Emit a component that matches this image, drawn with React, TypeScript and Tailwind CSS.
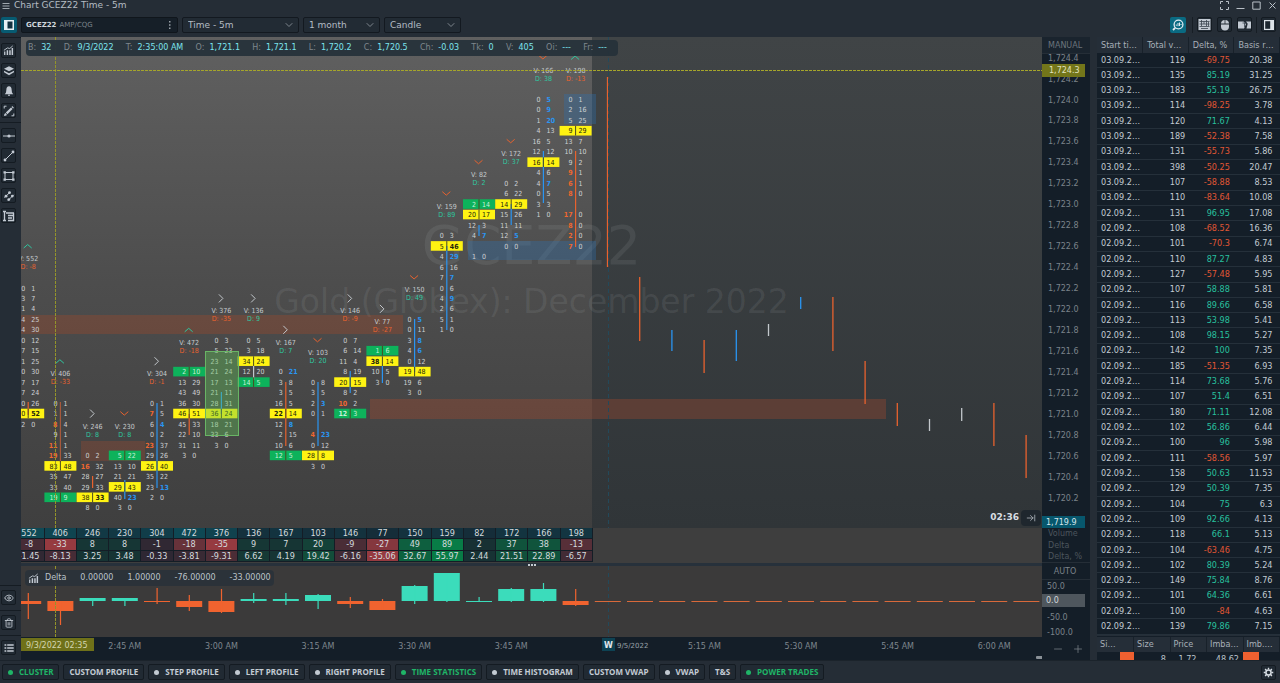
import React from "react";
import { ArrowRightToLine, ChevronDown, Eye, Trash2, Minus, Plus } from "lucide-react";

type Kind = "" | "y" | "g";
interface Row {
  r: number;
  a: string;
  b: string;
  k: Kind;
}
interface Cluster {
  v: number;
  d: number;
  pct: string;
  dir: "up" | "down" | "right";
  dirColor: string;
  start: number;
  rows: string;
  line?: [number, number, string];
}

const ORANGE = "#e8622e";
const BLUE = "#2a95f2";
const TEAL = "#2fc7a0";
const PALE = "#c3c8cc";

const PITCH = 32.2;
const colX = (k: number) => 7.2 + PITCH * k;
const rowY = (r: number) => 62.5 + 10.474 * r;

// Row syntax: "bid ask", leading y/g = filled cells, trailing o = orange, b = blue, * = bold, "-" = empty level
const clusters: Cluster[] = [
  { v: 552, d: -8, pct: "-1.45", dir: "up", dirColor: TEAL, start: 18, rows: "0 1|3 7|11 4|24 25|34 30|10 12|7 15|21 25|20 30|7 17|17 24|20 26|y70 52*|2 0", line: [365, 378, ORANGE] },
  { v: 406, d: -33, pct: "-8.13", dir: "up", dirColor: TEAL, start: 29, rows: "0 1|1 1|8o 4|9 1|11o 1|19o 33|y83 48|35 47|33 40|g19 9", line: [365, 425, "#a8593c"] },
  { v: 246, d: 8, pct: "3.25", dir: "right", dirColor: PALE, start: 34, rows: "0 2|16o 32|28 27|29 33|y38 33*|8 0", line: [439, 451, ORANGE] },
  { v: 230, d: 8, pct: "3.48", dir: "down", dirColor: ORANGE, start: 34, rows: "g5 22|13 10|21 21|y29 43|40 23b|3 0", line: [443, 462, BLUE] },
  { v: 304, d: -1, pct: "-0.33", dir: "right", dirColor: PALE, start: 29, rows: "0 1|7o 5|6 4b|0 2|23o 37|29 26|y26 40|35 22|23 13b|2 0", line: [366, 451, BLUE] },
  { v: 472, d: -18, pct: "-3.81", dir: "up", dirColor: TEAL, start: 26, rows: "g2 10|13 29|43 49|36 30|y46 51|45 33|22 10|31 11|3 0", line: [377, 398, ORANGE] },
  { v: 376, d: -35, pct: "-9.31", dir: "right", dirColor: PALE, start: 23, rows: "0 3|5 23|23 14|21 24|17 13|21 11|28 31|y36 24|18 21|33 6|3 0", line: [355, 377, BLUE] },
  { v: 136, d: 9, pct: "6.62", dir: "right", dirColor: PALE, start: 23, rows: "0 5|3 18|y34 24|12 20|g14 5", line: [329, 343, PALE] },
  { v: 167, d: 7, pct: "4.19", dir: "right", dirColor: PALE, start: 26, rows: "0 21b|3 8|3 5|16 5|y22* 14|12 8b|2 15|10 6|g12 5", line: [345, 409, ORANGE] },
  { v: 103, d: 20, pct: "19.42", dir: "down", dirColor: ORANGE, start: 27, rows: "0 8|3 5|2 3b|0 1|-|4o 23b|0 12|y28 8|3 0", line: [345, 409, BLUE] },
  { v: 146, d: -9, pct: "-6.16", dir: "right", dirColor: PALE, start: 23, rows: "0 7|6 14|11 4|8 19|y20 15|8 2|10o 2|g12* 3", line: [334, 356, BLUE] },
  { v: 77, d: -27, pct: "-35.06", dir: "right", dirColor: PALE, start: 24, rows: "g1 6|y38* 14|10 5|3 0", line: [329, 346, BLUE] },
  { v: 150, d: 49, pct: "32.67", dir: "down", dirColor: ORANGE, start: 21, rows: "0 5b|0 11|3 8b|4 6b|0 12|y19 48|19 6|3 0", line: [282, 335, BLUE] },
  { v: 159, d: 89, pct: "55.97", dir: "down", dirColor: ORANGE, start: 13, rows: "0 3|y5 46*|4 29b|6 16|7 7b|0 6|4 9b|2 6|5 1|1 0", line: [209, 293, BLUE] },
  { v: 82, d: 2, pct: "2.44", dir: "down", dirColor: ORANGE, start: 10, rows: "g2 14|y20 17|12 3|4 7b|-|1 0", line: [188, 199, BLUE] },
  { v: 172, d: 37, pct: "21.51", dir: "down", dirColor: ORANGE, start: 8, rows: "0 2|6 22|y14 29|15 26|11 11|12 5b|0 0", line: [167, 188, BLUE] },
  { v: 166, d: 38, pct: "22.89", dir: "down", dirColor: ORANGE, start: 0, rows: "0 5b|0 9b|1 20b|4 13|16 5|12 12|y16 14|4 6|4 7b|0 5|3 3|1 0", line: [114, 166, BLUE] },
  { v: 198, d: -13, pct: "-6.57", dir: "up", dirColor: TEAL, start: 0, rows: "0 1|2 16|5 25|y9 29|13 7|10 10|9 2|9o 1|6o 1|8o 0|-|17o 0|8o 0|2o 0|7o 0", line: [114, 210, ORANGE] },
];

const parseRows = (c: Cluster): Row[] =>
  c.rows.split("|").flatMap((s, i) => {
    if (s === "-") return [];
    const k: Kind = s[0] === "y" ? "y" : s[0] === "g" ? "g" : "";
    const [a, b] = (k ? s.slice(1) : s).split(" ");
    return [{ r: c.start + i, a, b, k }];
  });

const cellFill = (t: string, k: Kind) => {
  if (k === "y") return "#22240a";
  if (k === "g") return "#c8f0d8";
  if (t.endsWith("o")) return "#f0672f";
  if (t.endsWith("b")) return BLUE;
  return "#cfd2d4";
};
const isBold = (t: string) => /[ob*]$/.test(t);

const candles: [number, number, number, string][] = [
  [18, 40, 230, ORANGE],
  [19, 240, 304, ORANGE],
  [20, 293, 314, BLUE],
  [21, 303, 336, ORANGE],
  [22, 293, 324, BLUE],
  [23, 287, 299, PALE],
  [24, 260, 272, BLUE],
  [25, 260, 314, ORANGE],
  [26, 324, 367, ORANGE],
  [27, 366, 389, ORANGE],
  [28, 382, 394, PALE],
  [29, 371, 384, PALE],
  [30, 366, 409, ORANGE],
  [31, 398, 441, ORANGE],
];

// body top, body bottom, wick top, wick bottom
const deltaBars: [number, number, number, number, 0 | 1][] = [
  [35, 38, 27, 53, 0],
  [35, 45, 35, 59, 0],
  [32, 35, 32, 40, 1],
  [32, 35, 32, 40, 1],
  [35, 36, 22, 38, 0],
  [35, 41, 29, 45, 0],
  [35, 46, 23, 47, 0],
  [33, 35, 27, 37, 1],
  [33, 35, 27, 39, 1],
  [29, 35, 28, 43, 1],
  [35, 38, 31, 42, 0],
  [35, 44, 33, 44, 0],
  [20, 35, 19, 38, 1],
  [7, 35, 7, 36, 1],
  [35, 36, 31, 35, 1],
  [23, 35, 22, 36, 1],
  [23, 35, 17, 36, 1],
  [35, 39, 23, 40, 0],
];

const trades = `119 -69.75 20.38|135 85.19 31.25|183 55.19 26.75|114 -98.25 3.78|120 71.67 4.13|189 -52.38 7.58|131 -55.73 5.86|398 -50.25 20.47|107 -58.88 8.53|110 -83.64 10.08|131 96.95 17.08|108 -68.52 16.36|101 -70.3 6.74|110 87.27 4.83|127 -57.48 5.95|107 58.88 5.81|116 89.66 6.58|113 53.98 5.41|108 98.15 5.27|142 100 7.35|185 -51.35 6.93|114 73.68 5.76|107 51.4 6.51|180 71.11 12.08|102 56.86 6.44|100 96 5.98|111 -58.56 5.97|158 50.63 11.53|129 50.39 7.35|104 75 6.3|109 92.66 4.13|118 66.1 5.13|104 -63.46 4.75|102 80.39 5.24|149 75.84 8.76|101 64.36 6.61|100 -84 4.63|139 79.86 7.15`
  .split("|")
  .map((s) => s.split(" "));

const NARROW = "font-['DejaVu_Sans_Condensed','Noto_Sans',sans-serif]";

function Chevron({ x, y, dir, color }: { x: number; y: number; dir: string; color: string }) {
  const d =
    dir === "up"
      ? `M${x - 4} ${y + 2}L${x} ${y - 1.5}L${x + 4} ${y + 2}`
      : dir === "down"
        ? `M${x - 4} ${y - 2}L${x} ${y + 1.5}L${x + 4} ${y - 2}`
        : `M${x - 2} ${y - 4}L${x + 2} ${y}L${x - 2} ${y + 4}`;
  return <path d={d} fill="none" stroke={color} strokeWidth="1" />;
}

function ClusterColumn({ c, k }: { c: Cluster; k: number }) {
  const x = colX(k);
  const top = rowY(c.start);
  const rows = parseRows(c);
  return (
    <g>
      <Chevron x={x - 0.5} y={top - 42} dir={c.dir} color={c.dirColor} />
      <text x={x} y={top - 27} textAnchor="middle" fill="#c5cacd">{`V: ${c.v}`}</text>
      <text x={x} y={top - 19} textAnchor="middle" fill={c.d < 0 ? ORANGE : TEAL}>{`D: ${c.d}`}</text>
      {rows.map((row) =>
        row.k ? (
          <rect key={row.r} x={x - 16} y={rowY(row.r) - 5} width="32" height="9.6" fill={row.k === "y" ? "#fff312" : "#0db25b"} />
        ) : null,
      )}
      {c.line && <path d={`M${x} ${c.line[0]}V${c.line[1]}`} stroke={c.line[2]} strokeWidth="1.2" />}
      {rows.map((row) => {
        const y = rowY(row.r) + 2.5;
        return (
          <g key={row.r}>
            {row.k && <path d={`M${x} ${y - 7.5}v9.6`} stroke="#4a4a22" />}
            <text x={x - 3} y={y} textAnchor="end" fill={cellFill(row.a, row.k)} fontWeight={isBold(row.a) ? 700 : 400}>
              {row.a.replace(/[ob*]$/, "")}
            </text>
            <text x={x + 3} y={y} fill={cellFill(row.b, row.k)} fontWeight={isBold(row.b) ? 700 : 400}>
              {row.b.replace(/[ob*]$/, "")}
            </text>
          </g>
        );
      })}
    </g>
  );
}

function MainPlot() {
  return (
    <svg className={`block h-full w-full text-[7px] ${NARROW}`} role="img" aria-label="Cluster chart">
      <defs>
        <linearGradient id="bg" x1="0" y1="0" x2="0" y2="1">
          <stop offset="0" stopColor="#606060" />
          <stop offset="0.5" stopColor="#4d4d4d" />
          <stop offset="1" stopColor="#3f3f3f" />
        </linearGradient>
        <linearGradient id="night" x1="0" y1="0" x2="0" y2="1">
          <stop offset="0" stopColor="#404446" />
          <stop offset="1" stopColor="#303538" />
        </linearGradient>
      </defs>
      <rect width="571" height="100%" fill="url(#bg)" />
      <rect x="571" width="100%" height="100%" fill="url(#night)" />
      <g fill="#c8ccd0" fillOpacity="0.1" textAnchor="middle" fontFamily="'DejaVu Sans',sans-serif">
        <text x="50%" y="227" fontSize="54">GCEZ22</text>
        <text x="50%" y="276" fontSize="33">Gold (Globex): December 2022</text>
      </g>
      <rect x="0" y="278" width="382" height="19" fill="#c04a1e" fillOpacity="0.26" />
      <rect x="349" y="362" width="516" height="20" fill="#b04a2a" fillOpacity="0.32" />
      <rect x="60" y="404" width="64" height="20" fill="#b04a2a" fillOpacity="0.28" />
      <rect x="543" y="57" width="32" height="30" fill="#2d6fae" fillOpacity="0.35" />
      <rect x="447" y="204" width="128" height="19" fill="#2d6fae" fillOpacity="0.35" />
      {clusters.map((c, k) => (
        <ClusterColumn key={k} c={c} k={k} />
      ))}
      {candles.map(([k, a, b, color]) => (
        <path key={k} d={`M${colX(k) - 0.3} ${a}V${b}`} stroke={color} strokeWidth="1.3" />
      ))}
      <rect x="184.5" y="314.5" width="33" height="84" fill="#62c45a" fillOpacity="0.38" stroke="#69b565" />
      <path d="M587.5 0V2000" stroke="#23495a" strokeDasharray="4 3" />
      <path d="M34.5 0V2000" stroke="#94942a" strokeDasharray="3 1" />
      <path d="M0 33.5H4000" stroke="#a5a52b" strokeDasharray="3 1" />
    </svg>
  );
}

function Readout() {
  const items: [string, string][] = [
    ["B", "32"], ["D", "9/3/2022"], ["T", "2:35:00 AM"], ["O", "1,721.1"], ["H", "1,721.1"], ["L", "1,720.2"],
    ["C", "1,720.5"], ["Ch", "-0.03"], ["Tk", "0"], ["V", "405"], ["Oi", "---"], ["Fr", "---"],
  ];
  return (
    <dl className="absolute top-[3px] left-[5px] flex h-4 w-[592px] items-center justify-between rounded-sm bg-[#26313a]/95 pr-[11px] pl-0.5 text-[8px]">
      {items.map(([k, v]) => (
        <div key={k} className="flex gap-[5px] whitespace-nowrap">
          <dt className="text-[#7f878d]">{k}:</dt>
          <dd className="text-[#7ce4ee]">{v}</dd>
        </div>
      ))}
    </dl>
  );
}

const mix = (from: number[], to: number[], t: number) =>
  `rgb(${from.map((f, i) => Math.round(f + (to[i] - f) * Math.min(1, t))).join(",")})`;
const BASE = [26, 36, 48];
const signed = (v: number, max: number) => (v < 0 ? mix(BASE, [150, 58, 64], 0.15 - v / 38) : mix(BASE, [8, 124, 70], 0.12 + v / max));

function StatsTable() {
  const rows: { name: string; get: (c: Cluster) => string; color: (c: Cluster) => string }[] = [
    { name: "Volume", get: (c) => `${c.v}`, color: (c) => mix([23, 36, 48], [14, 74, 86], 0.1 + c.v / 552) },
    { name: "Delta", get: (c) => `${c.d}`, color: (c) => signed(c.d, 89) },
    { name: "Delta, %", get: (c) => c.pct, color: (c) => signed(parseFloat(c.pct), 56) },
  ];
  return (
    <div className="h-[35px] shrink-0 overflow-hidden bg-[#3e3e3e]">
      <table className={`h-[34px] w-[572px] table-fixed border-collapse text-[9px] leading-[10px] text-[#d4dade] ${NARROW}`}>
        <colgroup>
          <col className="w-[23px]" />
          {clusters.slice(1).map((_, i) => (
            <col key={i} />
          ))}
        </colgroup>
        <tbody>
          {rows.map((row) => (
            <tr key={row.name}>
              {clusters.map((c, i) => (
                <td key={i} className="overflow-hidden border-r border-b border-[#141d26] p-0 text-center" style={{ background: row.color(c) }}>
                  {i === 0 ? <span className="-ml-2 block w-8">{row.get(c)}</span> : row.get(c)}
                </td>
              ))}
            </tr>
          ))}
        </tbody>
      </table>
    </div>
  );
}

function BarsIcon() {
  return (
    <svg viewBox="0 0 12 12" className="size-[11px] shrink-0" fill="#c3cad3">
      <path d="M1.2 7.2h1.4V11H1.2zM4 5.6h1.6V11H4zM6.8 5.6h1.6V11H6.800zM9.400 3.200H11V11H9.400z" />
      <path d="M1 5.800L4.800 3.200 7.400 3.800 10.600 1" fill="none" stroke="#c3cad3" strokeWidth="1" />
    </svg>
  );
}

function DeltaPane() {
  return (
    <div className="relative h-[71px] shrink-0 bg-[#3b3a3a]">
      <svg className="block h-full w-full" role="img" aria-label="Delta histogram">
        <path d="M587.5 0V80" stroke="#23495a" strokeDasharray="4 3" />
        {deltaBars.map(([t, b, wt, wb, up], k) => (
          <g key={k} fill={up ? "#3bdcbb" : "#f0632f"}>
            <rect x={colX(k) - 13} y={t} width="26" height={b - t} />
            <rect x={colX(k) - 0.5} y={wt} width="1.2" height={wb - wt} />
          </g>
        ))}
        {Array.from({ length: 50 }, (_, i) => (
          <rect key={i} x={colX(i + 18) - 13} y="35" width="26" height="1" fill="#d9693a" />
        ))}
        <path d="M34.5 0V71" stroke="#94942a" strokeDasharray="3 1" />
      </svg>
      <div className="absolute top-1 left-1 flex h-4 items-center gap-[14px] rounded-sm bg-[#2a323a]/90 px-[3px] text-[8px] whitespace-nowrap text-[#bcc3c9]">
        <span className="-mr-2"><BarsIcon /></span>
        <span>Delta</span>
        <span>0.00000</span>
        <span>1.00000</span>
        <span>-76.00000</span>
        <span>-33.00000</span>
      </div>
    </div>
  );
}

function TimeAxis() {
  const labels: [number, string][] = [
    [3, "2:45 AM"], [6, "3:00 AM"], [9, "3:15 AM"], [12, "3:30 AM"], [15, "3:45 AM"], [21, "5:15 AM"], [24, "5:30 AM"], [27, "5:45 AM"], [30, "6:00 AM"],
  ];
  return (
    <div className="h-[23px] shrink-0 bg-[#141e28]">
      <svg className="block h-full w-full text-[8px]" fill="#7f878e">
        {labels.map(([k, t]) => (
          <text key={k} x={colX(k)} y="12" textAnchor="middle">{t}</text>
        ))}
        <rect y="1" width="73" height="13" fill="#6f7119" />
        <text x="5" y="11" fill="#d3d5b0">9/3/2022 02:35</text>
        <rect x="581" y="1" width="13" height="13" fill="#0d4253" />
        <text x="587.5" y="11" textAnchor="middle" fontWeight="700" fill="#e2e8ec">W</text>
        <text x="596" y="11" className="text-[7px]" fill="#9aa2a8">9/5/2022</text>
        <rect x="1015" y="19" width="7" height="3" rx="1" fill="#8a9197" />
      </svg>
    </div>
  );
}

function PriceAxis() {
  const ticks = Array.from({ length: 22 }, (_, i) => 1724.4 - i * 0.2).filter((p) => p > 1720.1);
  return (
    <div className="flex w-12 shrink-0 flex-col bg-[#141e28]">
      <svg className="block min-h-0 w-full flex-1 text-[8px]" fill="#7b838a" role="img" aria-label="Price scale">
        {ticks.map((p) => (
          <text key={p} x="6" y={rowY((1724 - p) * 10) + 3}>{`1,${(p - 1000).toFixed(1)}`}</text>
        ))}
        <rect width="48" height="16" fill="#1a242e" />
        <text x="6" y="11" fill="#6c757d">MANUAL</text>
        <rect y="16" width="48" height="1" fill="#252e37" />
        <rect y="27" width="43" height="13" fill="#73761a" />
        <text x="7" y="36" fill="#e0e2c0">1,724.3</text>
        <rect y="479" width="43" height="13" fill="#07576d" />
        <text x="4" y="488" fill="#d6e6ec">1,719.9</text>
      </svg>
      <div className="flex h-[35px] shrink-0 flex-col justify-between border-b border-[#252e37] pl-[6px] text-[8px] leading-[11px] text-[#4c555d]">
        <span>Volume</span>
        <span>Delta</span>
        <span>Delta, %</span>
      </div>
      <svg className="block h-[74px] w-full shrink-0 text-[8px]" fill="#7b838a" role="img" aria-label="Delta scale">
        <rect y="16" width="48" height="1" fill="#252e37" />
        <text x="23" y="11" textAnchor="middle">AUTO</text>
        <text x="5" y="26">50.0</text>
        <rect y="31" width="43" height="13" fill="#4e565d" />
        <text x="4" y="40" fill="#d2d7db">0.0</text>
        <text x="5" y="57">-50.0</text>
        <text x="5" y="72">-100.0</text>
      </svg>
      <div className="flex h-[23px] shrink-0 items-center gap-2 pl-2.5 text-[#7b838a]">
        <button type="button" aria-label="Zoom out"><Minus className="size-3" strokeWidth={1.5} /></button>
        <button type="button" aria-label="Zoom in"><Plus className="size-3" strokeWidth={1.5} /></button>
      </div>
    </div>
  );
}

const TOOL = "flex h-[15px] w-[15px] shrink-0 items-center justify-center rounded-[2px] border border-[#141b22] bg-[#212a33] text-[#c3cad3]";

function Ico({ children }: { children: React.ReactNode }) {
  return (
    <svg viewBox="0 0 12 12" className="size-3 shrink-0" fill="none" stroke="#c3cad3" strokeWidth="1">
      {children}
    </svg>
  );
}

function LeftToolbar() {
  const top: [string, React.ReactNode][] = [
    ["Indicators", <BarsIcon />],
    ["Layers", <Ico><path d="M6 1.300l5 2.500L6 6.300 1 3.800z" fill="#c3cad3" stroke="none" /><path d="M1 5.800l5 2.500 5-2.500v1.400L6 10.200 1 7.200z" fill="#c3cad3" stroke="none" /></Ico>],
    ["Alerts", <Ico><path d="M6 1.200c1.800 0 2.600 1.500 2.600 3.200L9 7.500l1.200 1.700H1.800L3 7.500l.4-3.100C3.400 2.700 4.200 1.200 6 1.200zM5 9.800h2v1H5z" fill="#c3cad3" stroke="none" /></Ico>],
    ["Drawings", <Ico><path d="M3.600 8.400l5.200-5.200" strokeWidth="2.200" /><path d="M9.300 2.700l.8-.8" strokeWidth="2.200" /><path d="M1.200 3.500V1.200h2.300M10.800 8.500v2.300H8.500" /><path d="M1.500 10.500l.7-2 1.300 1.300z" fill="#c3cad3" /></Ico>],
  ];
  const mid: [string, React.ReactNode][] = [
    ["Horizontal line", <Ico><path d="M0 6h12" /><circle cx="6" cy="6" r="1.600" fill="#c3cad3" stroke="none" /></Ico>],
    ["Trend line", <Ico><path d="M2 10l8-8" /><circle cx="2" cy="10" r="1.400" fill="#c3cad3" stroke="none" /><circle cx="10" cy="2" r="1.400" fill="#c3cad3" stroke="none" /></Ico>],
    ["Rectangle", <Ico><path d="M2 2.500h8v7H2z" /><path d="M.5 1.200h2.400v2.400H.5zM9.100 1.200h2.400v2.400H9.100zM.5 8.400h2.400v2.400H.5zM9.100 8.400h2.400v2.400H9.100z" fill="#c3cad3" stroke="none" /></Ico>],
    ["Channel", <Ico><path d="M1.500 7.700L7.200 2M5 10.500l5.700-5.700" /><circle cx="3" cy="6.200" r="1.400" fill="#c3cad3" stroke="none" /><circle cx="6.500" cy="2.700" r="1.400" fill="#c3cad3" stroke="none" /><circle cx="5.800" cy="9.600" r="1.400" fill="#c3cad3" stroke="none" /><circle cx="9.300" cy="6.100" r="1.400" fill="#c3cad3" stroke="none" /></Ico>],
    ["Range profile", <Ico><path d="M1.500 1v10M0 1.500h3M0 10.500h3M3 3h8M5 5.500h6M5 8h4M5 10.500h6M10.500 3v8" strokeWidth="1.300" /></Ico>],
  ];
  const bottom: [string, React.ReactNode][] = [
    ["Show objects", <Eye className="size-2.5" strokeWidth={2} />],
    ["Delete objects", <Trash2 className="size-2.5" strokeWidth={2} />],
    ["Object list", <Ico><path d="M1.500 3h1.800M4.200 3h6.500M1.500 6h1.800M4.200 6h6.500M1.500 9h1.800M4.200 9h6.500" strokeWidth="1.700" /></Ico>],
  ];
  return (
    <nav aria-label="Drawing tools" className="flex w-[21px] shrink-0 flex-col border-t border-[#151c23] bg-[#252d36]">
      <div className="flex flex-col gap-[5px] border-b border-[#151c23] pt-[5px] pb-1 pl-[1px]">
        {top.map(([n, i]) => <button key={n} type="button" aria-label={n} className={TOOL}>{i}</button>)}
      </div>
      <div className="flex flex-1 flex-col gap-[5px] pt-[5px] pl-[1px]">
        {mid.map(([n, i]) => <button key={n} type="button" aria-label={n} className={TOOL}>{i}</button>)}
      </div>
      {bottom.map(([n, i]) => (
        <div key={n} className="border-t border-[#151c23] pt-1 pb-[5px] pl-[1px]">
          <button type="button" aria-label={n} className={TOOL}>{i}</button>
        </div>
      ))}
    </nav>
  );
}

function Picker({ label, value, width }: { label: string; value: string; width: string }) {
  return (
    <label className={`relative flex h-4 items-center ${width}`}>
      <span className="sr-only">{label}</span>
      <select className="h-4 w-full appearance-none rounded-[2px] border border-[#131920] bg-[#222b34] pl-[5px] text-[9px] leading-[14px] text-[#b4bcc4]">
        <option>{value}</option>
      </select>
      <ChevronDown className="pointer-events-none absolute top-0.5 right-1 size-3 text-[#7d858d]" strokeWidth={2} />
    </label>
  );
}

function TopBar() {
  return (
    <header className="shrink-0">
      <div className="flex h-3 items-center pr-[3px] pl-[2px]">
        <svg viewBox="0 0 8 8" className="mr-1 size-2 shrink-0" stroke="#a0a8af"><path d="M.5 1.500h7M.5 4h7M.5 6.500h7" /></svg>
        <h1 className="-mt-0.5 text-[9px] leading-3 text-[#b4bcc3]">Chart GCEZ22 Time - 5m</h1>
        <div className="-mt-0.5 ml-auto flex items-center gap-[7px] text-[#b9c0c7]">
          <button type="button" aria-label="Full screen"><svg viewBox="0 0 9 9" className="size-[9px]" fill="none" stroke="currentColor"><path d="M.5 3V.5H3M6 .5h2.500V3M8.500 6v2.500H6M3 8.500H.5V6" /></svg></button>
          <button type="button" aria-label="Minimize"><svg viewBox="0 0 9 9" className="size-[9px]" fill="none" stroke="currentColor"><path d="M.5 7.500h8" /></svg></button>
          <button type="button" aria-label="Maximize"><svg viewBox="0 0 9 9" className="size-[9px]" fill="none" stroke="currentColor"><path d="M.8 1h7.400v7.200H.8z" /></svg></button>
          <button type="button" aria-label="Close"><svg viewBox="0 0 9 9" className="size-[9px]" fill="none" stroke="currentColor"><path d="M1.500 1.500l6 6M7.500 1.500l-6 6" /></svg></button>
        </div>
      </div>
      <div className="flex h-[25px] items-center pr-1 pl-[1px]">
        <button type="button" aria-label="Toggle left panel" className="flex size-4 shrink-0 items-center justify-center rounded-[2px] bg-[#075b72]">
          <svg viewBox="0 0 10 10" className="size-2.5"><rect width="10" height="10" fill="#e6f0f4" /><rect x="3.500" y="1.500" width="5" height="7" fill="#143240" /></svg>
        </button>
        <div className="ml-1 flex h-4 w-[157px] shrink-0 items-center rounded-[2px] border border-[#10161c] bg-[#161f28] pr-[6px] pl-[4px] leading-[14px]">
          <span className="text-[7px] font-bold text-[#d0d6db]">GCEZ22</span>
          <span className="ml-[3px] text-[7px] text-[#7b838a]">AMP/CQG</span>
          <button type="button" aria-label="Symbol menu" className="ml-auto">
            <svg viewBox="0 0 2 10" className="h-2.5 w-0.5" fill="#9aa2a9"><path d="M0 1h1.500v1.500H0zM0 4.300h1.500v1.500H0zM0 7.600h1.500v1.500H0z" /></svg>
          </button>
        </div>
        <div className="ml-1 flex gap-1">
          <Picker label="Time frame" value="Time - 5m" width="w-[117px]" />
          <Picker label="Period" value="1 month" width="w-[77px]" />
          <Picker label="Chart type" value="Candle" width="w-[77px]" />
        </div>
        <div className="ml-auto flex items-center gap-1">
          <button type="button" aria-label="Search by symbol" className="mr-0.5 flex size-4 items-center justify-center rounded-[2px] bg-[#0a6a82]">
            <svg viewBox="0 0 12 12" className="size-3" fill="none" stroke="#dfeaf0"><circle cx="6.500" cy="5.500" r="4.400" strokeWidth="1.300" /><path d="M3.200 8.800L1 11" strokeWidth="1.800" /><path d="M4.300 6.800V5.500M6 7.200V4M7.500 7V3.500M9 6V5" strokeWidth="1" /></svg>
          </button>
          <span className="h-4 w-px bg-[#171e25]" />
          <div className="flex gap-[5px]">
            <button type="button" aria-label="Keyboard" className={TOOL}>
              <svg viewBox="0 0 13 13" className="size-[13px] shrink-0"><rect x=".5" y="1" width="12" height="11" fill="#c3cad3" /><path d="M1.500 3.500h10M1.500 6h10M1.500 8.500h10M3.500 2v6M6 3.500v2.500M8.500 2v6M10.500 4v4M3 10.500h7" stroke="#39434e" strokeWidth=".8" fill="none" /></svg>
            </button>
            <button type="button" aria-label="Mouse" className={TOOL}>
              <svg viewBox="0 0 12 12" className="size-3 shrink-0" fill="#c3cad3"><path d="M2 4.500C2 2.500 3.500 1 5.600 1v3.500zM6.400 1C8.500 1 10 2.500 10 4.500H6.400zM2 5.400h8v2.300C10 10 8.500 11.500 6 11.500S2 10 2 7.700z" /></svg>
            </button>
            <button type="button" aria-label="Quick trading" className={TOOL}>
              <svg viewBox="0 0 13 12" className="h-3 w-[13px] shrink-0" fill="#c3cad3"><path d="M0 2.500h5.500L8 5 6 9.500H0zM8 2.500h5v7H8.500l1.200-4.700z" /><path d="M4.500 4h4M6.500 4v4" stroke="#39434e" strokeWidth=".8" /></svg>
            </button>
          </div>
          <span className="h-4 w-px bg-[#171e25]" />
          <button type="button" aria-label="Toggle right panel" className={TOOL}>
            <svg viewBox="0 0 10 10" className="size-2.5"><rect width="10" height="10" fill="#dde3e8" /><rect x="1.200" y="1.200" width="5" height="7.600" fill="#1d2730" /></svg>
          </button>
        </div>
      </div>
    </header>
  );
}

function SidePanel() {
  const head = "truncate border-r border-[#18212a] bg-[#252e38] px-[4px] text-left font-normal text-[#a8b0b8]";
  return (
    <aside className={`flex w-[183px] shrink-0 flex-col overflow-hidden bg-[#141e28] text-[9px] leading-[11px] ${NARROW}`}>
      <div className="min-h-0 flex-1 overflow-hidden">
        <table className="h-full w-full table-fixed border-collapse">
          <thead>
            <tr className="h-4">
              {["Start ti…", "Total v…", "Delta, %", "Basis r…"].map((h) => <th key={h} className={head}>{h}</th>)}
            </tr>
          </thead>
          <tbody>
            {trades.map(([vol, delta, basis], i) => (
              <tr key={i} className="border-b border-[#25303a] text-right text-[#c3cbd2]">
                <td className="px-[4px] text-left">{i < 10 ? "03.09.2…" : "02.09.2…"}</td>
                <td className="pr-[3px]">{vol}</td>
                <td className={delta.startsWith("-") ? "pr-1 text-[#e05634]" : "pr-1 text-[#28c09f]"}>{delta}</td>
                <td className="pr-[7px]">{basis}</td>
              </tr>
            ))}
          </tbody>
        </table>
      </div>
      <div className="h-[25px] shrink-0 overflow-hidden border-t border-[#252e38] pt-px">
        <table className="w-full table-fixed border-collapse">
          <thead>
            <tr className="h-[15px]">
              {["Si…", "Size", "Price", "Imba…", "Imb.…"].map((h) => <th key={h} className="border-r border-[#18212a] bg-[#252e38] px-[3px] text-left font-normal whitespace-nowrap text-[#a8b0b8]">{h}</th>)}
            </tr>
          </thead>
          <tbody>
            <tr className="h-[15px] text-right text-[#bcc4cb]">
              <td className="p-0"><span className="ml-auto block h-[15px] w-3.5 bg-[#ee6030]" /></td>
              <td className="pr-1">8</td>
              <td className="pr-2.5">1.72</td>
              <td className="pr-1">48.62</td>
              <td className="p-0"><span className="block h-[15px] w-4 bg-[#ee6030]" /></td>
            </tr>
          </tbody>
        </table>
      </div>
    </aside>
  );
}

function BottomBar() {
  const tabs: [string, "none" | "off" | "on"][] = [
    ["CLUSTER", "on"], ["CUSTOM PROFILE", "none"], ["STEP PROFILE", "off"], ["LEFT PROFILE", "off"], ["RIGHT PROFILE", "off"],
    ["TIME STATISTICS", "on"], ["TIME HISTOGRAM", "off"], ["CUSTOM VWAP", "none"], ["VWAP", "off"], ["T&S", "none"], ["POWER TRADES", "on"],
  ];
  return (
    <footer className="flex h-[23px] shrink-0 items-center border-t border-[#1b232b] pr-1 pl-[2px]">
      <div className="flex gap-1">
        {tabs.map(([t, s]) => (
          <button
            key={t}
            type="button"
            className={`flex h-4 items-center gap-[6px] rounded-[2px] border border-[#141b22] bg-[#212a33] px-[5px] font-['Open_Sans','Noto_Sans',sans-serif] text-[8px] font-bold whitespace-nowrap ${s === "on" ? "text-[#1fb567]" : "text-[#c3cbd3]"}`}
          >
            {s !== "none" && <span className="size-[5px] rounded-full bg-current" />}
            {t}
          </button>
        ))}
      </div>
      <button type="button" aria-label="Settings" className={`${TOOL} ml-auto`}>
        <svg viewBox="0 0 12 12" className="size-[11px]" fill="none" stroke="#d5dbe1"><circle cx="6" cy="6" r="2.800" strokeWidth="1.700" /><path d="M6 .8v2M6 9.200v2M.8 6h2M9.200 6h2M2.300 2.300l1.400 1.400M8.300 8.300l1.400 1.400M9.700 2.300L8.300 3.700M3.700 8.300L2.300 9.700" strokeWidth="1.500" /></svg>
      </button>
    </footer>
  );
}

export default function App() {
  return (
    <div className="flex h-screen flex-col overflow-hidden bg-[#252d36] font-['DejaVu_Sans',sans-serif]">
      <TopBar />
      <div className="flex min-h-0 flex-1">
        <LeftToolbar />
        <main className="flex min-w-0 flex-1 flex-col overflow-hidden">
          <section className="relative min-h-0 flex-1">
            <MainPlot />
            <Readout />
            <div className="absolute right-px bottom-[2px] flex items-center gap-[2px]">
              <span className="text-[9px] font-bold text-[#d9dee2]">02:36</span>
              <button type="button" aria-label="Go to latest bar" className="flex h-4 w-5 items-center justify-center rounded bg-[#1f272e] text-[#a9b1b8]">
                <ArrowRightToLine className="size-2.5" strokeWidth={2} />
              </button>
            </div>
          </section>
          <StatsTable />
          <div className="flex h-[3px] shrink-0 items-center justify-center gap-px bg-[#27313b]">
            <span className="size-[2px] bg-[#c3cad1]" />
            <span className="size-[2px] bg-[#c3cad1]" />
            <span className="size-[2px] bg-[#c3cad1]" />
          </div>
          <DeltaPane />
          <TimeAxis />
        </main>
        <PriceAxis />
        <div className="w-[7px] shrink-0 bg-[#252d36]" />
        <SidePanel />
      </div>
      <BottomBar />
    </div>
  );
}
